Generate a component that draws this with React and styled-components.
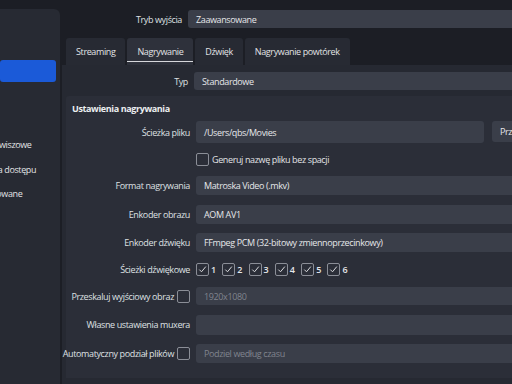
import React from 'react';
import styled, { createGlobalStyle } from 'styled-components';

const GlobalStyle = createGlobalStyle`
  html, body {
    margin: 0;
    padding: 0;
    background: #1c1e25;
  }
  body {
    font-family: "Open Sans", "Noto Sans", sans-serif;
    font-size: 9px;
    letter-spacing: -0.38px;
    color: #e2e3e6;
  }
`;

const Window = styled.div`
  display: flex;
  width: 512px;
  height: 384px;
  overflow: hidden;
  background: #1c1e25;
`;

const Sidebar = styled.div`
  flex: 0 0 60px;
  margin-top: 9px;
  padding-top: 2px;
  background: #272a33;
  border-top-right-radius: 6px;
  overflow: hidden;
`;

const NavItem = styled.div`
  height: 22px;
  margin: 0 4px 2.5px 0;
  display: flex;
  align-items: center;
  border-radius: 3px;
  background: ${p => (p.$active ? '#1b5ad8' : 'transparent')};
  white-space: nowrap;
`;

const NavText = styled.span`
  margin-left: -38px;
  color: #e2e3e6;
`;

const Main = styled.div`
  flex: 0 0 560px;
  padding: 10px 0 0 2px;
  display: flex;
  flex-direction: column;
`;

const TopRow = styled.div`
  display: grid;
  grid-template-columns: 120px 1fr;
  column-gap: 6px;
  align-items: center;
`;

const Label = styled.div`
  display: flex;
  justify-content: flex-end;
  align-items: center;
  gap: 3px;
  text-align: right;
  white-space: nowrap;
  color: #dfe0e3;
`;

const Field = styled.div`
  height: ${p => p.$h || 19}px;
  display: flex;
  align-items: center;
  padding: 0 8px;
  border-radius: 3px;
  background: #3a3e49;
  color: ${p => (p.$disabled ? '#80848e' : '#e6e7ea')};
  white-space: nowrap;
  overflow: hidden;
`;

const Tabs = styled.div`
  display: flex;
  gap: 2px;
  margin: 10px 0 0 4px;
`;

const Tab = styled.div`
  height: 27px;
  padding: 0 10px;
  display: flex;
  align-items: center;
  position: relative;
  background: ${p => (p.$active ? '#2e313b' : '#272a33')};
  border-radius: 3px 3px 0 0;
  color: #e2e3e6;
  &::after {
    content: '';
    display: ${p => (p.$active ? 'block' : 'none')};
    position: absolute;
    left: 0;
    right: 0;
    bottom: 3px;
    height: 1.5px;
    background: #d6d7db;
  }
`;

const TabPanel = styled.div`
  flex: 1;
  background: #262932;
  padding: 7px 0 0 4px;
  display: flex;
  flex-direction: column;
  gap: 6px;
`;

const TypeRow = styled.div`
  display: grid;
  grid-template-columns: 122px 1fr;
  column-gap: 6px;
  align-items: center;
`;

const Group = styled.div`
  flex: 1;
  background: #2b2e38;
  border-radius: 3px 0 0 0;
  padding: 6px 0 0 0;
  margin-bottom: 6px;
`;

const GroupTitle = styled.div`
  height: 12px;
  padding-left: 6px;
  font-weight: 700;
  color: #eceef0;
  margin-bottom: 7px;
`;

const Form = styled.div`
  display: grid;
  grid-template-columns: 124px 1fr;
  column-gap: 6px;
  row-gap: 9.5px;
  align-items: center;
`;

const PathRow = styled.div`
  display: flex;
  gap: 8px;
`;

const PathField = styled(Field)`
  width: 272px;
`;

const Button = styled.div`
  height: 21px;
  width: 60px;
  padding: 0 8px;
  display: flex;
  align-items: center;
  border-radius: 3px;
  background: #3a3e49;
  color: #e6e7ea;
`;

const CheckRow = styled.div`
  display: flex;
  align-items: center;
  gap: ${p => p.$gap || 3}px;
  height: ${p => p.$h || 14}px;
`;

const CheckItem = styled.div`
  display: flex;
  align-items: center;
  gap: 2px;
  font-weight: 600;
  color: #e6e7ea;
`;

const Box = styled.div`
  width: 11px;
  height: 11px;
  border: 1px solid #8b8e97;
  border-radius: 2px;
  display: flex;
  align-items: center;
  justify-content: center;
  flex: 0 0 auto;
`;

const CheckBox = ({ checked }) => (
  <Box>
    {checked && (
      <svg width="9" height="9" viewBox="0 0 9 9">
        <path d="M1.3 4.6 L3.5 6.8 L7.8 1.6" fill="none" stroke="#d9dadd" strokeWidth="1" />
      </svg>
    )}
  </Box>
);

const navItems = [
  'Ogólne', 'Stream', 'Wyjście', 'Dźwięk', 'Wideo',
  'Skróty klawiszowe', 'Ułatwienia dostępu', 'Zaawansowane',
];

export default function App() {
  return (
    <>
      <GlobalStyle />
      <Window>
        <Sidebar>
          {navItems.map((item, i) => (
            <NavItem key={item} $active={i === 2}>
              <NavText>{item}</NavText>
            </NavItem>
          ))}
        </Sidebar>
        <Main>
          <TopRow>
            <Label>Tryb wyjścia</Label>
            <Field $h={18}>Zaawansowane</Field>
          </TopRow>
          <Tabs>
            <Tab>Streaming</Tab>
            <Tab $active>Nagrywanie</Tab>
            <Tab>Dźwięk</Tab>
            <Tab>Nagrywanie powtórek</Tab>
          </Tabs>
          <TabPanel>
            <TypeRow>
              <Label>Typ</Label>
              <Field $h={18}>Standardowe</Field>
            </TypeRow>
            <Group>
              <GroupTitle>Ustawienia nagrywania</GroupTitle>
              <Form>
                <Label>Ścieżka pliku</Label>
                <PathRow>
                  <PathField $h={22}>/Users/qbs/Movies</PathField>
                  <Button>Przeglądaj</Button>
                </PathRow>

                <div />
                <CheckRow>
                  <CheckBox />
                  <span>Generuj nazwę pliku bez spacji</span>
                </CheckRow>

                <Label>Format nagrywania</Label>
                <Field>Matroska Video (.mkv)</Field>

                <Label>Enkoder obrazu</Label>
                <Field>AOM AV1</Field>

                <Label>Enkoder dźwięku</Label>
                <Field>FFmpeg PCM (32-bitowy zmiennoprzecinkowy)</Field>

                <Label>Ścieżki dźwiękowe</Label>
                <CheckRow $gap={6.5} $h={16}>
                  {[1, 2, 3, 4, 5, 6].map(n => (
                    <CheckItem key={n}>
                      <CheckBox checked />
                      <span>{n}</span>
                    </CheckItem>
                  ))}
                </CheckRow>

                <Label>
                  Przeskaluj wyjściowy obraz
                  <CheckBox />
                </Label>
                <Field $h={18} $disabled>1920x1080</Field>

                <Label>Własne ustawienia muxera</Label>
                <Field $h={20} />

                <Label>
                  Automatyczny podział plików
                  <CheckBox />
                </Label>
                <Field $disabled>Podziel według czasu</Field>
              </Form>
            </Group>
          </TabPanel>
        </Main>
      </Window>
    </>
  );
}
